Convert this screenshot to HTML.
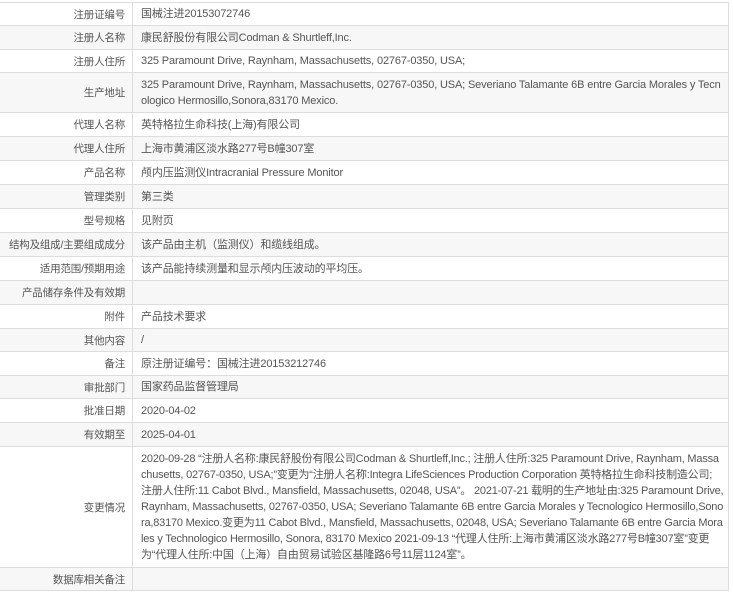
<!DOCTYPE html>
<html><head><meta charset="utf-8"><style>
body{margin:0;background:#fff;font-family:"Liberation Sans","Noto Sans CJK SC",sans-serif;font-size:11px;color:#555;}
.t{position:absolute;left:0;top:2px;width:728px;border-top:1px solid #ddd;border-right:1px solid #ddd;}
.r{display:flex;border-bottom:1px solid #ddd;box-sizing:border-box;}
.r:nth-child(even){background:#f7f7f7;}
.l{width:133px;flex:none;box-sizing:border-box;border-right:1px solid #ddd;text-align:right;padding-right:7px;display:flex;align-items:center;justify-content:flex-end;color:#555;white-space:nowrap;font-size:10.5px;letter-spacing:-0.2px;}
.v{flex:1;min-width:0;padding:0 4px 0 8px;display:flex;align-items:center;line-height:16px;color:#555;letter-spacing:-0.15px;word-break:break-all;}
.c{letter-spacing:-0.2px;line-height:16px;}
</style></head><body>
<div class="t">
<div class="r" style="height:23px"><div class="l">注册证编号</div><div class="v">国械注进20153072746</div></div>
<div class="r" style="height:24px"><div class="l">注册人名称</div><div class="v">康民舒股份有限公司Codman &amp; Shurtleff,Inc.</div></div>
<div class="r" style="height:23px"><div class="l">注册人住所</div><div class="v">325 Paramount Drive, Raynham, Massachusetts, 02767-0350, USA;</div></div>
<div class="r" style="height:40px"><div class="l">生产地址</div><div class="v">325 Paramount Drive, Raynham, Massachusetts, 02767-0350, USA; Severiano Talamante 6B entre Garcia Morales y Tecnologico Hermosillo,Sonora,83170 Mexico.</div></div>
<div class="r" style="height:24px"><div class="l">代理人名称</div><div class="v">英特格拉生命科技(上海)有限公司</div></div>
<div class="r" style="height:24px"><div class="l">代理人住所</div><div class="v">上海市黄浦区淡水路277号B幢307室</div></div>
<div class="r" style="height:24px"><div class="l">产品名称</div><div class="v">颅内压监测仪Intracranial Pressure Monitor</div></div>
<div class="r" style="height:24px"><div class="l">管理类别</div><div class="v">第三类</div></div>
<div class="r" style="height:24px"><div class="l">型号规格</div><div class="v">见附页</div></div>
<div class="r" style="height:24px"><div class="l">结构及组成/主要组成成分</div><div class="v">该产品由主机（监测仪）和缆线组成。</div></div>
<div class="r" style="height:24px"><div class="l">适用范围/预期用途</div><div class="v">该产品能持续测量和显示颅内压波动的平均压。</div></div>
<div class="r" style="height:24px"><div class="l">产品储存条件及有效期</div><div class="v"></div></div>
<div class="r" style="height:24px"><div class="l">附件</div><div class="v">产品技术要求</div></div>
<div class="r" style="height:23px"><div class="l">其他内容</div><div class="v">/</div></div>
<div class="r" style="height:24px"><div class="l">备注</div><div class="v">原注册证编号：国械注进20153212746</div></div>
<div class="r" style="height:23px"><div class="l">审批部门</div><div class="v">国家药品监督管理局</div></div>
<div class="r" style="height:24px"><div class="l">批准日期</div><div class="v">2020-04-02</div></div>
<div class="r" style="height:24px"><div class="l">有效期至</div><div class="v">2025-04-01</div></div>
<div class="r" style="height:121px"><div class="l">变更情况</div><div class="v c">2020-09-28 “注册人名称:康民舒股份有限公司Codman &amp; Shurtleff,Inc.; 注册人住所:325 Paramount Drive, Raynham, Massachusetts, 02767-0350, USA;”变更为“注册人名称:Integra LifeSciences Production Corporation 英特格拉生命科技制造公司; 注册人住所:11 Cabot Blvd., Mansfield, Massachusetts, 02048, USA”。 2021-07-21 载明的生产地址由:325 Paramount Drive, Raynham, Massachusetts, 02767-0350, USA; Severiano Talamante 6B entre Garcia Morales y Tecnologico Hermosillo,Sonora,83170 Mexico.变更为11 Cabot Blvd., Mansfield, Massachusetts, 02048, USA; Severiano Talamante 6B entre Garcia Morales y Technologico Hermosillo, Sonora, 83170 Mexico 2021-09-13 “代理人住所:上海市黄浦区淡水路277号B幢307室”变更为“代理人住所:中国（上海）自由贸易试验区基隆路6号11层1124室”。</div></div>
<div class="r" style="height:23px"><div class="l">数据库相关备注</div><div class="v"></div></div>
</div>
</body></html>
